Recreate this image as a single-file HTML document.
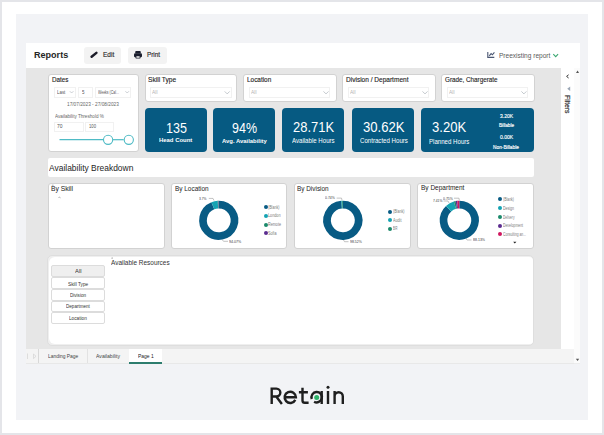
<!DOCTYPE html>
<html><head><meta charset="utf-8">
<style>
*{margin:0;padding:0;box-sizing:border-box}
html,body{width:604px;height:435px;overflow:hidden;background:#fff;font-family:"Liberation Sans",sans-serif}
.a{position:absolute}
.t{position:absolute;white-space:nowrap;line-height:1}
#frame{left:0;top:0;width:604px;height:435px;border:2px solid #e4e5e9}
#outer{left:16px;top:14px;width:572px;height:406px;background:#f2f3f6}
#header{left:26px;top:43px;width:554px;height:25px;background:#fff}
#canvas{left:26px;top:68px;width:535px;height:280.5px;background:#e6e6e6}
#fpane{left:561px;top:68px;width:19px;height:296px;background:#fff}
#tabs{left:26px;top:348.5px;width:547.8px;height:15.5px;background:#f4f4f4;border-bottom:1px solid #e8e8e8}
#sbar{left:573.8px;top:68px;width:6.2px;height:296px;background:#fbfbfb;border-bottom:1px solid #ececec}
.card{position:absolute;background:#fff;border:1px solid #d2d2d2;border-radius:3px}
.kpi{position:absolute;background:#065a82;border-radius:4px}
.btn{position:absolute;background:#f3f3f3;border-radius:3px}
.dd{position:absolute;border:1px solid #f1f1f1;background:#fff}
.rb{position:absolute;left:50.7px;width:54.3px;height:11.9px;background:#fff;border:1px solid #dcdcdc;border-radius:2px}
</style></head><body>
<div class="a" id="frame"></div>
<div class="a" id="outer"></div>
<div class="a" id="header"></div>
<div class="a" id="canvas"></div>
<div class="a" id="fpane"></div>
<div class="a" id="tabs"></div>
<div class="a" id="sbar"></div>

<div class="t" style="left:34.00px;top:51.23px;font-size:9.30px;color:#252525;font-weight:bold;transform:scaleX(0.9731);transform-origin:0 0;">Reports</div>
<div class="btn" style="left:84px;top:47px;width:36.5px;height:17px"></div>
<div class="t" style="left:102.90px;top:52.18px;font-size:6.76px;color:#2a2a2a;transform:scaleX(0.9618);transform-origin:0 0;-webkit-text-stroke:0.15px #2a2a2a;">Edit</div>
<div class="btn" style="left:127.5px;top:47px;width:39px;height:17px"></div>
<div class="t" style="left:146.80px;top:52.16px;font-size:6.90px;color:#2a2a2a;transform:scaleX(0.9239);transform-origin:0 0;-webkit-text-stroke:0.15px #2a2a2a;">Print</div>
<div class="t" style="left:498.80px;top:51.71px;font-size:7.31px;color:#5a5a5a;transform:scaleX(0.8972);transform-origin:0 0;">Preexisting report</div>
<div class="card" style="left:47.5px;top:74px;width:91.1px;height:77.9px"></div>
<div class="card" style="left:144.6px;top:74.2px;width:92.8px;height:27.5px"></div>
<div class="t" style="left:148.00px;top:76.81px;font-size:6.48px;color:#222;transform:scaleX(1.0209);transform-origin:0 0;-webkit-text-stroke:0.12px #222;">Skill Type</div>
<div class="dd" style="left:150.0px;top:86.9px;width:81.7px;height:10.9px"></div>
<div class="t" style="left:152.20px;top:90.18px;font-size:5.93px;color:#b3b3b3;transform:scaleX(0.8347);transform-origin:0 0;">All</div>
<div class="card" style="left:243.3px;top:74.2px;width:93.6px;height:27.5px"></div>
<div class="t" style="left:247.40px;top:76.81px;font-size:6.48px;color:#222;transform:scaleX(0.9914);transform-origin:0 0;-webkit-text-stroke:0.12px #222;">Location</div>
<div class="dd" style="left:248.7px;top:86.9px;width:81.7px;height:10.9px"></div>
<div class="t" style="left:250.90px;top:90.18px;font-size:5.93px;color:#b3b3b3;transform:scaleX(0.8347);transform-origin:0 0;">All</div>
<div class="card" style="left:342.1px;top:74.2px;width:94.1px;height:27.5px"></div>
<div class="t" style="left:346.00px;top:76.81px;font-size:6.48px;color:#222;transform:scaleX(1.0102);transform-origin:0 0;-webkit-text-stroke:0.12px #222;">Division / Department</div>
<div class="dd" style="left:347.5px;top:86.9px;width:81.7px;height:10.9px"></div>
<div class="t" style="left:349.70px;top:90.18px;font-size:5.93px;color:#b3b3b3;transform:scaleX(0.8347);transform-origin:0 0;">All</div>
<div class="card" style="left:441.1px;top:74.2px;width:93.8px;height:27.5px"></div>
<div class="t" style="left:445.10px;top:76.81px;font-size:6.48px;color:#222;transform:scaleX(0.9750);transform-origin:0 0;-webkit-text-stroke:0.12px #222;">Grade, Chargerate</div>
<div class="dd" style="left:446.5px;top:86.9px;width:81.7px;height:10.9px"></div>
<div class="t" style="left:448.70px;top:90.18px;font-size:5.93px;color:#b3b3b3;transform:scaleX(0.8347);transform-origin:0 0;">All</div>
<div class="t" style="left:51.70px;top:77.46px;font-size:6.54px;color:#222;transform:scaleX(0.9599);transform-origin:0 0;-webkit-text-stroke:0.12px #222;">Dates</div>
<div class="dd" style="left:54.1px;top:87.2px;width:21.6px;height:10.5px"></div>
<div class="dd" style="left:78.3px;top:87.2px;width:14.5px;height:10.5px"></div>
<div class="dd" style="left:95.2px;top:87.2px;width:36px;height:10.5px"></div>
<div class="t" style="left:56.50px;top:90.12px;font-size:5.52px;color:#555;transform:scaleX(0.7951);transform-origin:0 0;">Last</div>
<div class="t" style="left:82.00px;top:90.12px;font-size:5.52px;color:#555;transform:scaleX(0.8141);transform-origin:0 0;">5</div>
<div class="t" style="left:97.60px;top:90.36px;font-size:5.24px;color:#555;transform:scaleX(0.6665);transform-origin:0 0;">Weeks (Cal...</div>
<div class="t" style="left:67.40px;top:101.91px;font-size:5.66px;color:#666;transform:scaleX(0.8405);transform-origin:0 0;">17/07/2023 - 27/08/2023</div>
<div class="t" style="left:54.60px;top:113.73px;font-size:5.52px;color:#666;transform:scaleX(0.8377);transform-origin:0 0;">Availability Threshold %</div>
<div class="dd" style="left:54.4px;top:121.9px;width:29.2px;height:9.9px"></div>
<div class="dd" style="left:85px;top:121.9px;width:29.3px;height:9.9px"></div>
<div class="t" style="left:57.20px;top:124.29px;font-size:5.44px;color:#555;transform:scaleX(0.9085);transform-origin:0 0;">70</div>
<div class="t" style="left:88.80px;top:124.29px;font-size:5.44px;color:#555;transform:scaleX(0.7709);transform-origin:0 0;">100</div>
<div class="kpi" style="left:144.5px;top:108.1px;width:62.5px;height:43.7px"></div>
<div class="kpi" style="left:213.2px;top:108.1px;width:61.6px;height:43.7px"></div>
<div class="kpi" style="left:281.6px;top:108.1px;width:62.5px;height:43.7px"></div>
<div class="kpi" style="left:352.2px;top:108.1px;width:62px;height:43.7px"></div>
<div class="kpi" style="left:421px;top:108.1px;width:113.4px;height:43.7px"></div>
<div class="t" style="left:165.90px;top:120.12px;font-size:15.33px;color:#fff;transform:scaleX(0.8174);transform-origin:0 0;">135</div>
<div class="t" style="left:159.30px;top:138.40px;font-size:5.79px;color:#fff;font-weight:bold;transform:scaleX(1.0245);transform-origin:0 0;">Head Count</div>
<div class="t" style="left:231.90px;top:120.37px;font-size:15.04px;color:#fff;transform:scaleX(0.8305);transform-origin:0 0;">94%</div>
<div class="t" style="left:222.00px;top:138.05px;font-size:6.21px;color:#fff;font-weight:bold;transform:scaleX(0.9481);transform-origin:0 0;">Avg. Availability</div>
<div class="t" style="left:292.80px;top:120.94px;font-size:13.90px;color:#fff;transform:scaleX(0.9333);transform-origin:0 0;">28.71K</div>
<div class="t" style="left:292.00px;top:138.41px;font-size:6.48px;color:#fff;transform:scaleX(0.9430);transform-origin:0 0;">Available Hours</div>
<div class="t" style="left:363.10px;top:120.94px;font-size:13.90px;color:#fff;transform:scaleX(0.9446);transform-origin:0 0;">30.62K</div>
<div class="t" style="left:359.80px;top:138.41px;font-size:6.48px;color:#fff;transform:scaleX(0.9448);transform-origin:0 0;">Contracted Hours</div>
<div class="t" style="left:432.20px;top:120.27px;font-size:14.33px;color:#fff;transform:scaleX(0.9109);transform-origin:0 0;">3.20K</div>
<div class="t" style="left:429.10px;top:138.78px;font-size:6.76px;color:#fff;transform:scaleX(0.9036);transform-origin:0 0;">Planned Hours</div>
<div class="t" style="left:499.60px;top:113.63px;font-size:5.16px;color:#fff;transform:scaleX(0.9720);transform-origin:0 0;-webkit-text-stroke:0.15px #fff;">3.20K</div>
<div class="t" style="left:498.70px;top:124.25px;font-size:4.55px;color:#fff;transform:scaleX(1.0290);transform-origin:0 0;-webkit-text-stroke:0.15px #fff;">Billable</div>
<div class="t" style="left:499.60px;top:135.13px;font-size:5.16px;color:#fff;transform:scaleX(0.9720);transform-origin:0 0;-webkit-text-stroke:0.15px #fff;">0.00K</div>
<div class="t" style="left:493.20px;top:146.23px;font-size:4.69px;color:#fff;transform:scaleX(1.0243);transform-origin:0 0;-webkit-text-stroke:0.15px #fff;">Non-Billable</div>
<div class="a" style="left:47.5px;top:158.2px;width:486.5px;height:19.1px;background:#fff;border-radius:2px"></div>
<div class="t" style="left:48.70px;top:163.84px;font-size:8.69px;color:#252525;transform:scaleX(0.9737);transform-origin:0 0;">Availability Breakdown</div>
<div class="card" style="left:47.5px;top:183px;width:117.2px;height:65.7px"></div>
<div class="t" style="left:51.10px;top:185.63px;font-size:6.34px;color:#222;transform:scaleX(1.0626);transform-origin:0 0;">By Skill</div>
<div class="card" style="left:171.2px;top:183px;width:116.2px;height:65.7px"></div>
<div class="t" style="left:174.50px;top:185.63px;font-size:6.34px;color:#222;transform:scaleX(1.0163);transform-origin:0 0;">By Location</div>
<div class="card" style="left:293.5px;top:183px;width:117.4px;height:65.7px"></div>
<div class="t" style="left:297.30px;top:185.63px;font-size:6.34px;color:#222;transform:scaleX(1.0101);transform-origin:0 0;">By Division</div>
<div class="card" style="left:416.6px;top:183px;width:117.3px;height:65.7px"></div>
<div class="t" style="left:420.80px;top:185.34px;font-size:6.69px;color:#222;transform:scaleX(0.9733);transform-origin:0 0;">By Department</div>
<div class="a" style="left:47px;top:255px;width:487px;height:90.5px;background:#efefef;border:1px solid #dedede;border-radius:5px"></div>
<div class="a" style="left:49.3px;top:257.2px;width:483.8px;height:87px;background:#fff;border-radius:6px 4px 3px 6px"></div>
<div class="t" style="left:111.20px;top:259.63px;font-size:6.34px;color:#333;transform:scaleX(1.0186);transform-origin:0 0;">Available Resources</div>
<div class="rb" style="top:265.30px;background:#efefef"></div>
<div class="t" style="left:74.60px;top:269.71px;font-size:4.83px;color:#333;transform:scaleX(1.2119);transform-origin:0 0;">All</div>
<div class="rb" style="top:277.05px;background:#fff"></div>
<div class="t" style="left:67.80px;top:281.76px;font-size:5.24px;color:#333;transform:scaleX(0.9045);transform-origin:0 0;">Skill Type</div>
<div class="rb" style="top:288.80px;background:#fff"></div>
<div class="t" style="left:70.00px;top:293.61px;font-size:4.83px;color:#333;transform:scaleX(0.9467);transform-origin:0 0;">Division</div>
<div class="rb" style="top:300.55px;background:#fff"></div>
<div class="t" style="left:65.90px;top:305.22px;font-size:4.94px;color:#333;transform:scaleX(0.9256);transform-origin:0 0;">Department</div>
<div class="rb" style="top:312.30px;background:#fff"></div>
<div class="t" style="left:69.00px;top:316.90px;font-size:4.97px;color:#333;transform:scaleX(0.9481);transform-origin:0 0;">Location</div>
<svg class="a" style="left:0;top:0" width="604" height="435">
<path d="M218.75,204.55 A15.75,15.75 0 1 1 212.85,205.70" stroke="#085b84" stroke-width="7.70" fill="none"/>
<path d="M212.85,205.70 A15.75,15.75 0 0 1 217.93,204.57" stroke="#14a3b3" stroke-width="7.70" fill="none"/>
<path d="M217.93,204.57 A15.75,15.75 0 0 1 218.42,204.55" stroke="#1b8a6b" stroke-width="7.70" fill="none"/>
<path d="M218.42,204.55 A15.75,15.75 0 0 1 218.75,204.55" stroke="#5b2c8f" stroke-width="7.70" fill="none"/>
<path d="M342.80,204.55 A15.75,15.75 0 1 1 341.59,204.60" stroke="#085b84" stroke-width="7.70" fill="none"/>
<path d="M341.59,204.60 A15.75,15.75 0 0 1 342.09,204.57" stroke="#14a3b3" stroke-width="7.70" fill="none"/>
<path d="M342.09,204.57 A15.75,15.75 0 0 1 342.80,204.55" stroke="#1b8a6b" stroke-width="7.70" fill="none"/>
<path d="M459.30,204.55 A15.75,15.75 0 1 1 448.62,208.73" stroke="#085b84" stroke-width="7.70" fill="none"/>
<path d="M448.62,208.73 A15.75,15.75 0 0 1 454.96,205.16" stroke="#14a3b3" stroke-width="7.70" fill="none"/>
<path d="M454.96,205.16 A15.75,15.75 0 0 1 456.29,204.84" stroke="#1b8a6b" stroke-width="7.70" fill="none"/>
<path d="M456.29,204.84 A15.75,15.75 0 0 1 457.65,204.64" stroke="#5b2c8f" stroke-width="7.70" fill="none"/>
<path d="M457.65,204.64 A15.75,15.75 0 0 1 459.30,204.55" stroke="#d0175f" stroke-width="7.70" fill="none"/>
<g fill="none" stroke="#4fbbc5" stroke-width="1.2"><path d="M59.5,139.7 H103"/><path d="M113,139.7 H123.7"/></g><g fill="#fff" stroke="#4fbbc5" stroke-width="1.1"><circle cx="108.1" cy="139.8" r="4.6"/><circle cx="128.8" cy="139.8" r="4.6"/></g>
<path d="M224.7,91.4 l2.5,2.5 l2.5,-2.5" fill="none" stroke="#a9b0b8" stroke-width="0.7"/>
<path d="M323.5,91.4 l2.5,2.5 l2.5,-2.5" fill="none" stroke="#a9b0b8" stroke-width="0.7"/>
<path d="M422.5,91.4 l2.5,2.5 l2.5,-2.5" fill="none" stroke="#a9b0b8" stroke-width="0.7"/>
<path d="M521.4,91.4 l2.5,2.5 l2.5,-2.5" fill="none" stroke="#a9b0b8" stroke-width="0.7"/>
<path d="M69.8,91.2 l1.8,1.8 l1.8,-1.8" fill="none" stroke="#a9b0b8" stroke-width="0.6"/>
<path d="M125.4,91.2 l1.8,1.8 l1.8,-1.8" fill="none" stroke="#a9b0b8" stroke-width="0.6"/>
<path d="M91.6,56.8 L96.4,52.9" stroke="#1b1b28" stroke-width="2.5" stroke-linecap="round"/>
<g fill="#1b1f2e"><rect x="135.2" y="51" width="5.6" height="2.6" rx="1"/><rect x="134" y="53.2" width="8" height="4" rx="1.2"/><rect x="135.5" y="55.6" width="5" height="2.8" rx="0.6"/></g><rect x="136.4" y="56.2" width="3.2" height="1.6" fill="#e8e8e8"/>
<g fill="none" stroke="#4a5672" stroke-width="1.1"><path d="M487.8,52 V57.4 H494.3"/><path d="M489.3,55.8 L491.1,53.6 L492.4,54.8 L494.4,52.4"/></g>
<path d="M553.3,54.2 L555.7,56.6 L558.1,54.2" fill="none" stroke="#3aa871" stroke-width="1.1"/>
<path d="M568.6,74.8 L566.6,76.4 L568.6,78" fill="none" stroke="#333" stroke-width="1"/>
<path d="M576,73 L577.6,70.6 L579,73 Z" fill="#555"/>
<path d="M567.2,88.8 L570.2,86.6 L570.2,91 Z" fill="#9aa6b5"/>
<path d="M575.8,358.8 L577.6,361 L579.2,358.8 Z" fill="#555"/>
<g fill="none" stroke="#1f1f1f" stroke-width="2.4">
<path d="M271.7,404 V388.6 H276.4 A3.95,3.95 0 0 1 276.4,396.5 H271.7 M276.2,396.5 L281.9,404"/>
<path d="M284.6,397.3 H295.9 A5.65,5.65 0 1 0 295.3,399.9"/>
<path d="M302.5,387.7 V400.5 Q302.5,402.8 304.8,402.8 H308.6 M298.9,392.2 H307.9"/>
<path d="M311.81,398.98 A5.20,5.20 0 1 1 314.10,401.70"/>
<path d="M321.7,391 V404"/>
<path d="M328,391 V404"/>
<path d="M334.6,404 V391 M334.6,396.3 A4.1,4.1 0 0 1 342.8,396.3 V404"/>
</g>
<circle cx="328" cy="387.3" r="1.5" fill="#1f1f1f"/>
<circle cx="316.7" cy="397.5" r="2.5" fill="#2fb36a"/>
</svg>
<div class="a" style="left:263.80px;top:204.90px;width:4px;height:4px;border-radius:50%;background:#085b84"></div>
<div class="t" style="left:268.20px;top:205.56px;font-size:4.41px;color:#7a7a7a;transform:scaleX(0.8224);transform-origin:0 0;">(Blank)</div>
<div class="a" style="left:263.80px;top:213.80px;width:4px;height:4px;border-radius:50%;background:#14a3b3"></div>
<div class="t" style="left:268.20px;top:214.46px;font-size:4.41px;color:#7a7a7a;transform:scaleX(0.8487);transform-origin:0 0;">London</div>
<div class="a" style="left:263.80px;top:222.70px;width:4px;height:4px;border-radius:50%;background:#1b8a6b"></div>
<div class="t" style="left:268.20px;top:223.16px;font-size:4.65px;color:#7a7a7a;transform:scaleX(0.7983);transform-origin:0 0;">Remote</div>
<div class="a" style="left:263.80px;top:231.40px;width:4px;height:4px;border-radius:50%;background:#5b2c8f"></div>
<div class="t" style="left:268.20px;top:232.06px;font-size:4.41px;color:#7a7a7a;transform:scaleX(0.8446);transform-origin:0 0;">Sofia</div>
<div class="a" style="left:388.40px;top:209.60px;width:4px;height:4px;border-radius:50%;background:#085b84"></div>
<div class="t" style="left:392.80px;top:210.26px;font-size:4.41px;color:#7a7a7a;transform:scaleX(0.8224);transform-origin:0 0;">(Blank)</div>
<div class="a" style="left:388.40px;top:218.30px;width:4px;height:4px;border-radius:50%;background:#14a3b3"></div>
<div class="t" style="left:392.80px;top:218.96px;font-size:4.41px;color:#7a7a7a;transform:scaleX(0.8450);transform-origin:0 0;">Audit</div>
<div class="a" style="left:388.40px;top:226.90px;width:4px;height:4px;border-radius:50%;background:#1b8a6b"></div>
<div class="t" style="left:392.80px;top:227.36px;font-size:4.65px;color:#7a7a7a;transform:scaleX(0.5804);transform-origin:0 0;">BIR</div>
<div class="a" style="left:498.20px;top:197.30px;width:4px;height:4px;border-radius:50%;background:#085b84"></div>
<div class="t" style="left:502.60px;top:197.96px;font-size:4.41px;color:#7a7a7a;transform:scaleX(0.7867);transform-origin:0 0;">(Blank)</div>
<div class="a" style="left:498.20px;top:206.10px;width:4px;height:4px;border-radius:50%;background:#14a3b3"></div>
<div class="t" style="left:502.60px;top:206.76px;font-size:4.41px;color:#7a7a7a;transform:scaleX(0.8006);transform-origin:0 0;">Design</div>
<div class="a" style="left:498.20px;top:214.90px;width:4px;height:4px;border-radius:50%;background:#1b8a6b"></div>
<div class="t" style="left:502.60px;top:215.56px;font-size:4.41px;color:#7a7a7a;transform:scaleX(0.7213);transform-origin:0 0;">Delivery</div>
<div class="a" style="left:498.20px;top:223.60px;width:4px;height:4px;border-radius:50%;background:#5b2c8f"></div>
<div class="t" style="left:502.60px;top:224.26px;font-size:4.41px;color:#7a7a7a;transform:scaleX(0.7691);transform-origin:0 0;">Development</div>
<div class="a" style="left:498.20px;top:232.40px;width:4px;height:4px;border-radius:50%;background:#d0175f"></div>
<div class="t" style="left:502.60px;top:233.06px;font-size:4.41px;color:#7a7a7a;transform:scaleX(0.7499);transform-origin:0 0;">Consulting an...</div>
<div class="t" style="left:199.30px;top:196.76px;font-size:4.30px;color:#3a3a3a;transform:scaleX(0.7657);transform-origin:0 0;">3.7%</div>
<div class="t" style="left:228.80px;top:239.66px;font-size:4.30px;color:#3a3a3a;transform:scaleX(0.8368);transform-origin:0 0;">94.07%</div>
<div class="t" style="left:325.10px;top:196.46px;font-size:4.30px;color:#3a3a3a;transform:scaleX(0.8043);transform-origin:0 0;">0.74%</div>
<div class="t" style="left:350.30px;top:240.26px;font-size:4.30px;color:#3a3a3a;transform:scaleX(0.8025);transform-origin:0 0;">98.52%</div>
<div class="t" style="left:432.60px;top:199.44px;font-size:4.32px;color:#3a3a3a;transform:scaleX(0.7670);transform-origin:0 0;">7.41%</div>
<div class="t" style="left:442.50px;top:196.66px;font-size:4.30px;color:#3a3a3a;transform:scaleX(0.8125);transform-origin:0 0;">0.75%</div>
<div class="t" style="left:473.00px;top:238.46px;font-size:4.30px;color:#3a3a3a;transform:scaleX(0.8231);transform-origin:0 0;">88.13%</div>
<svg class="a" style="left:0;top:0" width="604" height="435"><g fill="none" stroke="#9a9a9a" stroke-width="0.6"><path d="M208.8,198.4 H213 L214,200.5"/><path d="M228,241.3 H223.5 L222.3,239.8"/><path d="M336.6,198.1 H341.5 L342,200"/><path d="M348.5,241.7 H344.5 L343.5,240"/><path d="M443.5,201 H448 L449,203"/><path d="M454,198.2 H459 L459.3,200.3"/><path d="M471.5,240 H467 L466,238.5"/></g><path d="M513.2,241.8 L514.8,243.6 L516.4,241.8 Z" fill="#222"/><path d="M58.5,197.5 Q59.5,196.8 60.5,197.8" stroke="#777" stroke-width="0.6" fill="none"/><path d="M51.8,185.2 H53.6" stroke="#888" stroke-width="0.7"/><path d="M111.4,258.2 Q112.2,257.6 113,258.4" stroke="#666" stroke-width="0.6" fill="none"/></svg>
<div class="t" style="left:571.4px;top:94.9px;font-size:7.35px;color:#333;-webkit-text-stroke:0.2px #333;transform-origin:0 0;transform:rotate(90deg) scaleX(0.92)">Filters</div>
<div class="a" style="left:38.4px;top:349px;width:0.8px;height:14px;background:#d8d8d8"></div>
<div class="a" style="left:86.6px;top:349px;width:0.8px;height:14px;background:#e2e2e2"></div>
<div class="a" style="left:129px;top:348.5px;width:33px;height:15.5px;background:#fff"></div>
<div class="a" style="left:129px;top:362px;width:33px;height:2px;background:#2d7d6e"></div>
<div class="t" style="left:47.80px;top:353.63px;font-size:5.52px;color:#444;transform:scaleX(0.8869);transform-origin:0 0;">Landing Page</div>
<div class="t" style="left:96.30px;top:353.63px;font-size:5.52px;color:#444;transform:scaleX(0.9282);transform-origin:0 0;">Availability</div>
<div class="t" style="left:137.60px;top:353.62px;font-size:5.52px;color:#222;transform:scaleX(0.8970);transform-origin:0 0;">Page 1</div>
<svg class="a" style="left:0;top:0" width="604" height="435"><path d="M27.5,353.5 V359" stroke="#ccc" stroke-width="0.6"/><path d="M33.5,354 L36,356.3 L33.5,358.6 Z" fill="none" stroke="#ccc" stroke-width="0.6"/></svg>
</body></html>
